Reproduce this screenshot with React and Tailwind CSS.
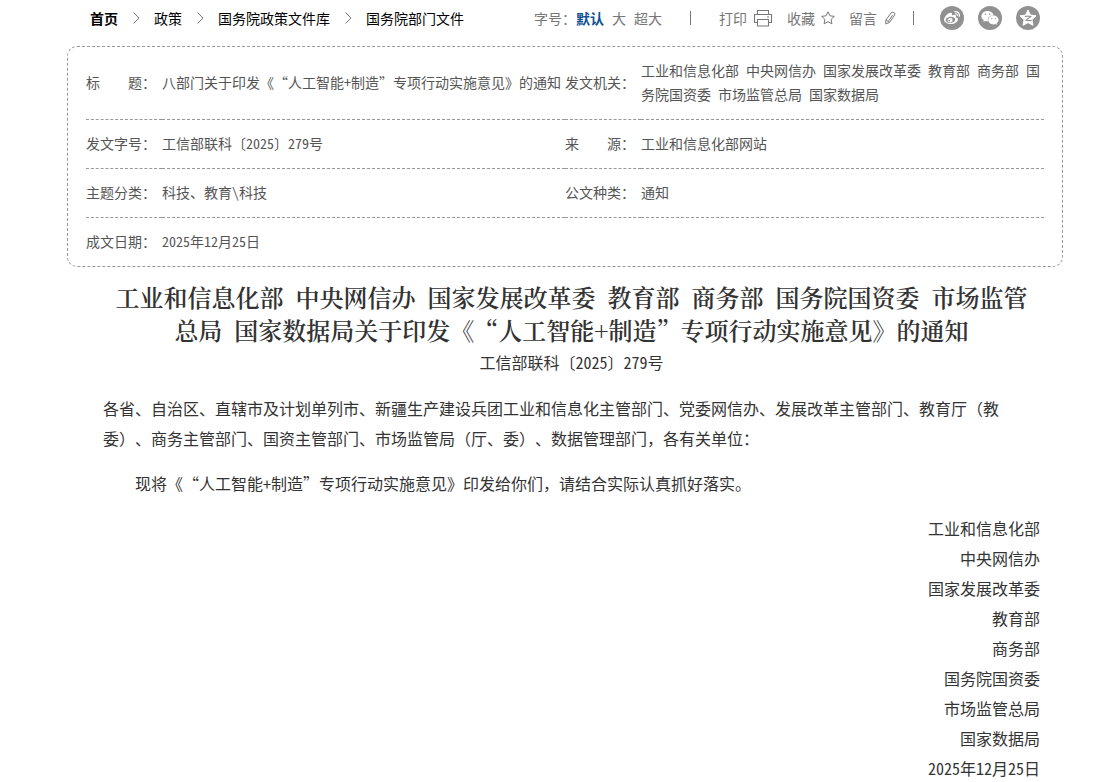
import { useState } from "react";
import { FaWeibo, FaWeixin } from "react-icons/fa";

const crumbs = ["首页", "政策", "国务院政策文件库", "国务院部门文件"];

const sizes = ["默认", "大", "超大"];

const signers = [
  "工业和信息化部",
  "中央网信办",
  "国家发展改革委",
  "教育部",
  "商务部",
  "国务院国资委",
  "市场监管总局",
  "国家数据局",
  "2025年12月25日",
];

function Chevron() {
  return (
    <svg className="w-2 h-3 mx-3.5" viewBox="0 0 8 12" fill="none" stroke="#777" strokeWidth="1">
      <path d="M1.5 0.5L7 6L1.5 11.5" />
    </svg>
  );
}

function PrinterIcon() {
  return (
    <svg className="w-5 h-5" viewBox="0 0 20 20" fill="none" stroke="#777" strokeWidth="1.1">
      <path d="M4.5 6.5V2.5h11v4" />
      <path d="M4.5 14.5H1.5V6.5h17v8h-3" />
      <path d="M4.5 11.5h11v6.5h-11z" />
      <path d="M14 9h2" />
    </svg>
  );
}

function StarIcon() {
  return (
    <svg className="w-3.5 h-3.5" viewBox="0 0 14 14" fill="none" stroke="#777" strokeWidth="1" strokeLinejoin="round">
      <path d="M7 0.8l1.9 4 4.4.6-3.2 3 .8 4.4L7 10.7l-3.9 2.1.8-4.4-3.2-3 4.4-.6z" />
    </svg>
  );
}

function PencilIcon() {
  return (
    <svg className="w-3.5 h-3.5" viewBox="0 0 14 14" fill="none" stroke="#777" strokeWidth="1" strokeLinejoin="round">
      <path d="M8.2 1.8Q9 .9 10.2 1.3L11.3 1.9Q12.3 2.7 11.7 3.9L6.6 11.4 2.8 13 2.9 9z" />
      <path d="M9.6 4.2L5.6 10M3 9l3.6 2.4" />
    </svg>
  );
}

function QzoneIcon() {
  return (
    <svg className="w-4.5 h-4.5" viewBox="0 0 18 18">
      <path
        d="M9 1l2.4 5.1 5.6.7-4.1 3.9 1.1 5.6L9 13.6l-5 2.7 1.1-5.6L1 6.8l5.6-.7z"
        fill="#fff"
        stroke="#fff"
        strokeLinejoin="round"
      />
      <path d="M5.8 7.5q3.2-.7 6 0L7 11.3q2.8.6 5.6.1" fill="none" stroke="#919191" strokeWidth="1.1" />
    </svg>
  );
}

function ShareLink({ label, children }) {
  return (
    <a
      href="#share"
      aria-label={label}
      className="flex items-center justify-center w-6 h-6 rounded-full bg-[#919191] text-white"
    >
      {children}
    </a>
  );
}

function TopBar() {
  const [size, setSize] = useState("默认");

  return (
    <div className="flex items-center justify-between h-9 px-[23px] text-sm">
      <nav className="flex items-center text-black">
        {crumbs.map((c, i) => (
          <span key={c} className="flex items-center">
            {i > 0 && <Chevron />}
            <a href="#crumb" className={i === 0 ? "font-bold" : ""}>
              {c}
            </a>
          </span>
        ))}
      </nav>

      <div className="flex items-center text-[#777]">
        <div className="flex items-center">
          <span>字号：</span>
          <div className="flex items-center gap-2">
            {sizes.map((s) => (
              <button
                key={s}
                onClick={() => setSize(s)}
                className={size === s ? "font-bold text-[#0f5293]" : ""}
              >
                {s}
              </button>
            ))}
          </div>
        </div>
        <span className="w-px h-3.5 mx-7 bg-[#777]" />
        <div className="flex items-center gap-3.5">
          <button className="flex items-center gap-1.5">
            打印
            <PrinterIcon />
          </button>
          <button className="flex items-center gap-1.5">
            收藏
            <StarIcon />
          </button>
          <button className="flex items-center gap-1.5">
            留言
            <PencilIcon />
          </button>
        </div>
        <span className="w-px h-3.5 ml-4 mr-[26px] bg-[#777]" />
        <div className="flex items-center gap-3.5">
          <ShareLink label="微博">
            <FaWeibo className="w-4 h-4" />
          </ShareLink>
          <ShareLink label="微信">
            <FaWeixin className="w-4.5 h-4.5" />
          </ShareLink>
          <ShareLink label="QQ空间">
            <QzoneIcon />
          </ShareLink>
        </div>
      </div>
    </div>
  );
}

// two-character labels are spread to the width of four
function Label({ children }) {
  const [first, second] = children;
  return (
    <th scope="row" className="w-[76px] pt-[11px] pb-[13px] font-normal text-left whitespace-nowrap">
      {children.length === 2 ? (
        <span className="flex">
          <span className="flex justify-between w-14">
            <span>{first}</span>
            <span>{second}</span>
          </span>
          ：
        </span>
      ) : (
        `${children}：`
      )}
    </th>
  );
}

function InfoTable() {
  return (
    <div className="mt-2.5 px-[18px] border border-dashed border-[#999] rounded-[10px]">
      <table className="w-full text-sm leading-6 text-[#555] border-collapse">
        <tbody>
          <tr className="border-b border-dashed border-[#999]">
            <Label>标题</Label>
            <td className="w-[403px] pt-[11px] pb-[13px] whitespace-nowrap">
              八部门关于印发《“人工智能+制造”专项行动实施意见》的通知
            </td>
            <Label>发文机关</Label>
            <td className="pt-[11px] pb-[13px]">
              工业和信息化部 中央网信办 国家发展改革委 教育部 商务部 国务院国资委 市场监管总局 国家数据局
            </td>
          </tr>
          <tr className="border-b border-dashed border-[#999]">
            <Label>发文字号</Label>
            <td className="pt-[11px] pb-[13px]">工信部联科〔2025〕279号</td>
            <Label>来源</Label>
            <td className="pt-[11px] pb-[13px]">工业和信息化部网站</td>
          </tr>
          <tr className="border-b border-dashed border-[#999]">
            <Label>主题分类</Label>
            <td className="pt-[11px] pb-[13px]">科技、教育\科技</td>
            <Label>公文种类</Label>
            <td className="pt-[11px] pb-[13px]">通知</td>
          </tr>
          <tr>
            <Label>成文日期</Label>
            <td className="pt-[11px] pb-[13px]" colSpan={3}>
              2025年12月25日
            </td>
          </tr>
        </tbody>
      </table>
    </div>
  );
}

function Article() {
  return (
    <article className="pt-[13px] pl-9 pr-[23px] text-[#333]">
      <h1 className="px-2 text-2xl leading-[33px] font-semibold text-center font-['Noto_Serif_CJK_SC','Noto_Sans_CJK_SC',serif]">
        工业和信息化部&ensp;中央网信办&ensp;国家发展改革委&ensp;教育部&ensp;商务部&ensp;国务院国资委&ensp;市场监管总局&ensp;国家数据局关于印发《“人工智能+制造”专项行动实施意见》的通知
      </h1>
      <p className="leading-[33px] text-center">工信部联科〔2025〕279号</p>

      <div className="flex flex-col gap-[15px] mt-3.5 leading-[30px]">
        <p>
          各省、自治区、直辖市及计划单列市、新疆生产建设兵团工业和信息化主管部门、党委网信办、发展改革主管部门、教育厅（教委）、商务主管部门、国资主管部门、市场监管局（厅、委）、数据管理部门，各有关单位：
        </p>
        <p className="indent-8">现将《“人工智能+制造”专项行动实施意见》印发给你们，请结合实际认真抓好落实。</p>
        <div className="text-right">
          {signers.map((s) => (
            <p key={s}>{s}</p>
          ))}
        </div>
      </div>
    </article>
  );
}

export default function App() {
  return (
    <div
      lang="zh-CN"
      className="min-h-screen pl-[67px] pr-[51px] bg-white [text-spacing-trim:space-all] font-['Noto_Sans_Mono_CJK_SC','Noto_Sans_CJK_SC',sans-serif]"
    >
      <TopBar />
      <InfoTable />
      <Article />
    </div>
  );
}
